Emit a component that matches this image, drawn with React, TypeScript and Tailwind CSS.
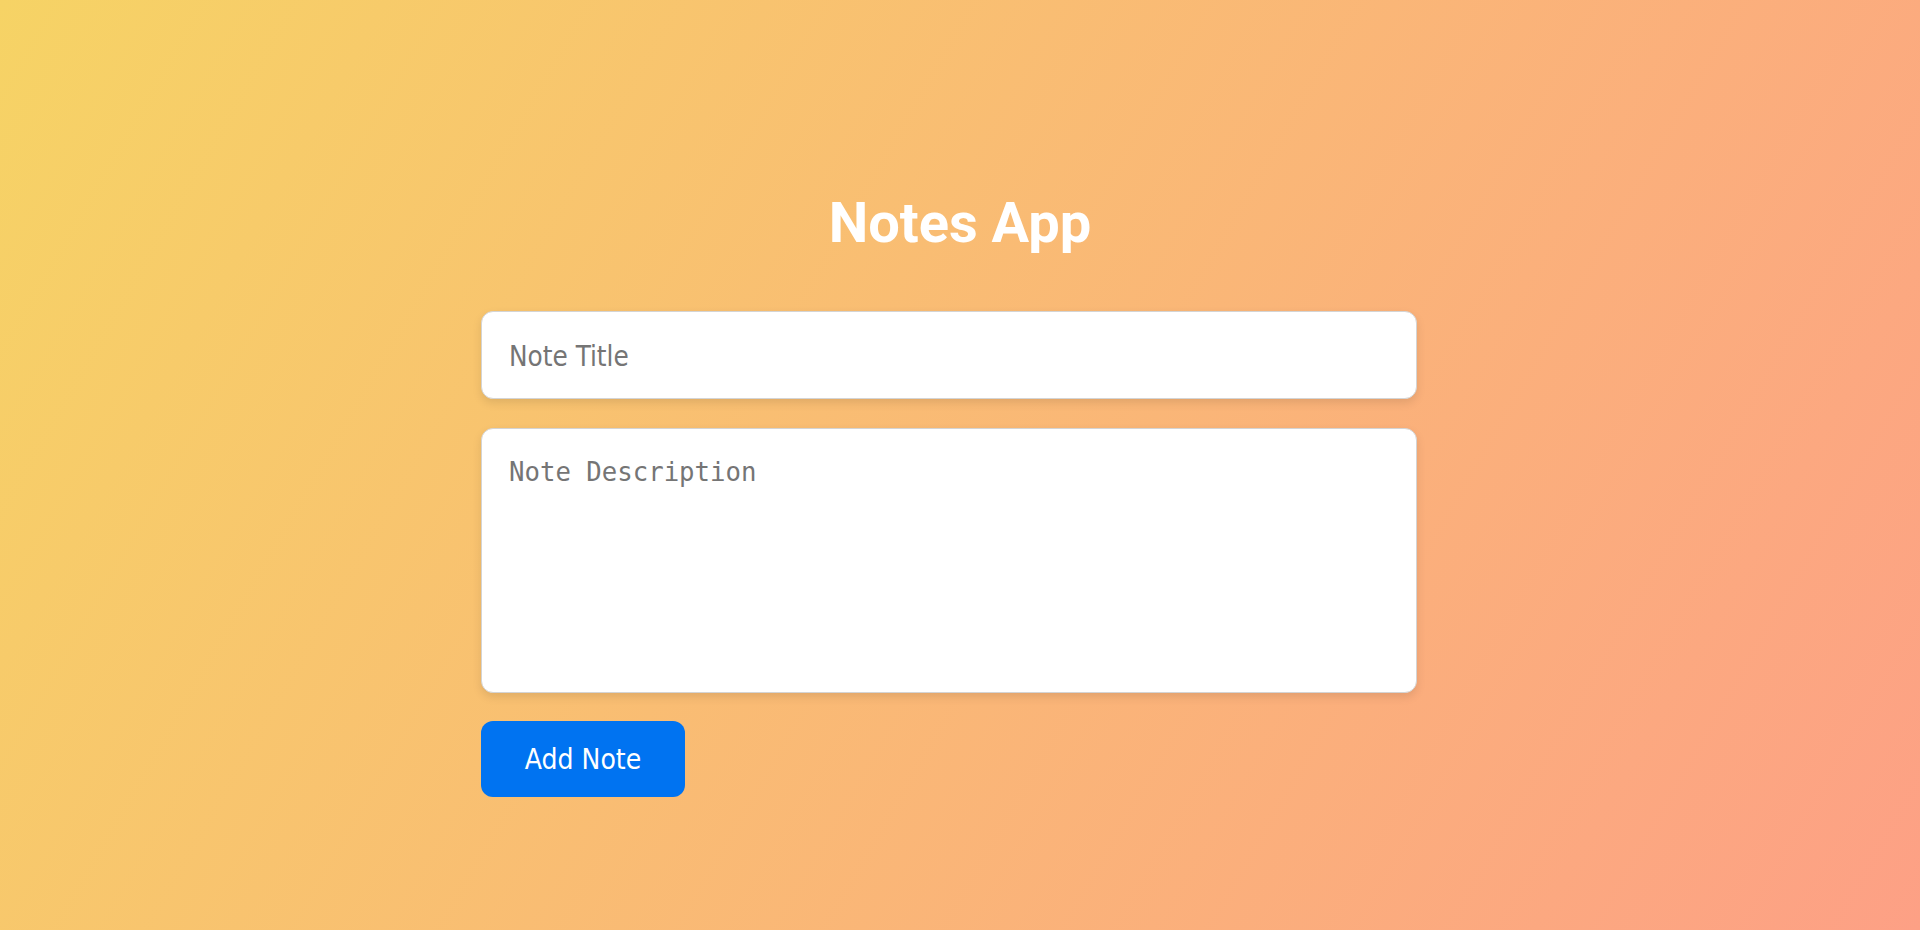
import { useState } from "react";

export default function App() {
  const [title, setTitle] = useState("");
  const [desc, setDesc] = useState("");

  return (
    <div className="min-h-screen w-full bg-[linear-gradient(120deg,#f6d365_0%,#fda085_100%)] pt-[191px]">
      <div className="mx-auto w-[960px]">
        <h1 className="mb-[54px] text-center font-['Roboto',sans-serif] text-[56px] font-bold leading-[1.172] text-white">
          Notes App
        </h1>
        <div className="flex flex-col items-start gap-[30px]">
          <input
            type="text"
            value={title}
            onChange={(e) => setTitle(e.target.value)}
            placeholder="Note Title"
            className="ml-px h-[88px] w-[936px] rounded-[12px] border border-[#d4d4d4] bg-white px-[27px] pt-[3px] font-['DejaVu_Sans_Condensed','DejaVu_Sans',sans-serif] text-[27.6px] font-stretch-condensed text-[#333] shadow-[0_4px_10px_rgba(0,0,0,0.1)] outline-none placeholder:text-[#757575]"
          />
          <textarea
            value={desc}
            onChange={(e) => setDesc(e.target.value)}
            placeholder="Note Description"
            className="ml-px -mt-px h-[265px] w-[936px] resize-none rounded-[12px] border border-[#d4d4d4] bg-white px-[27px] pb-[27px] pt-[28px] font-['DejaVu_Sans_Mono',monospace] text-[25.7px] leading-[1.17] text-[#333] shadow-[0_4px_10px_rgba(0,0,0,0.1)] outline-none placeholder:text-[#757575]"
          />
          <button className="-mt-[2px] ml-px flex h-[76px] w-[204px] items-center justify-center rounded-[12px] bg-[#0073f1] pt-[2px] font-['DejaVu_Sans_Condensed','DejaVu_Sans',sans-serif] text-[28px] font-stretch-condensed text-white">
            Add Note
          </button>
        </div>
      </div>
    </div>
  );
}
